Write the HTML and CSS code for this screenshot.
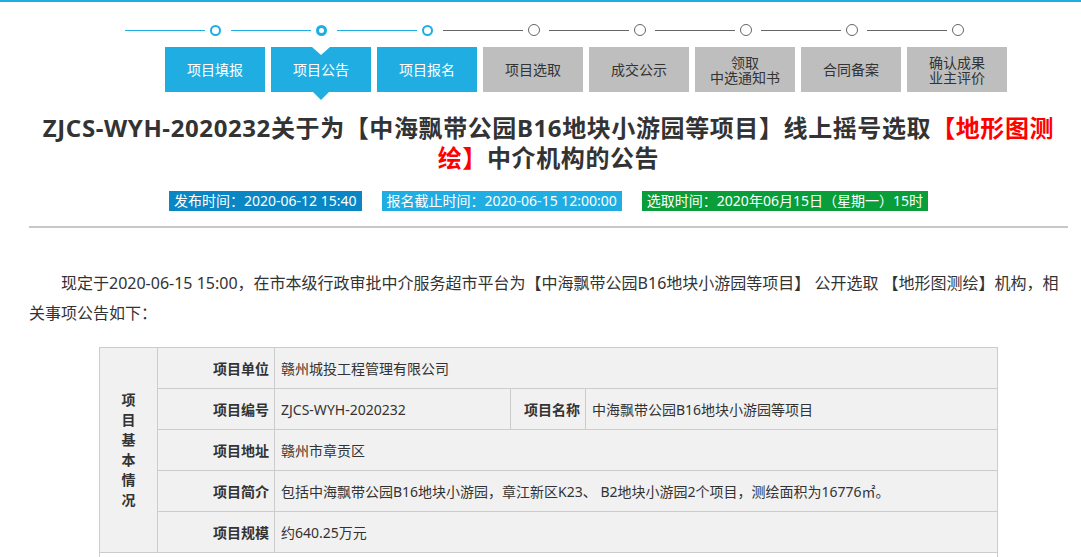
FILE: index.html
```html
<!DOCTYPE html>
<html lang="zh-CN">
<head>
<meta charset="utf-8">
<title>公告</title>
<link rel="stylesheet" href="styles.css">
</head>
<body>
<div class="topbar"></div>
<div class="steps">
  <div class="dots">
    <div class="unit done"><span class="line"></span><span class="dot"></span></div>
    <div class="unit active"><span class="line"></span><span class="dot"></span></div>
    <div class="unit done"><span class="line"></span><span class="dot"></span></div>
    <div class="unit todo"><span class="line"></span><span class="dot"></span></div>
    <div class="unit todo"><span class="line"></span><span class="dot"></span></div>
    <div class="unit todo"><span class="line"></span><span class="dot"></span></div>
    <div class="unit todo"><span class="line"></span><span class="dot"></span></div>
    <div class="unit todo"><span class="line"></span><span class="dot"></span></div>
  </div>
  <div class="btns">
    <div class="btn on">项目填报</div>
    <div class="btn on cur">项目公告</div>
    <div class="btn on">项目报名</div>
    <div class="btn">项目选取</div>
    <div class="btn">成交公示</div>
    <div class="btn two"><span>领取</span><span>中选通知书</span></div>
    <div class="btn">合同备案</div>
    <div class="btn two"><span>确认成果</span><span>业主评价</span></div>
  </div>
</div>
<div class="content">
  <h1 class="title">ZJCS-WYH-2020232关于为【中海飘带公园B16地块小游园等项目】线上摇号选取<span class="red">【地形图测<br>绘】</span>中介机构的公告</h1>
  <div class="tags">
    <span class="tag t1">发布时间：2020-06-12 15:40</span>
    <span class="tag t2">报名截止时间：2020-06-15 12:00:00</span>
    <span class="tag t3">选取时间：2020年06月15日（星期一）15时</span>
  </div>
  <div class="rule"></div>
  <p class="intro">现定于2020-06-15 15:00，在市本级行政审批中介服务超市平台为【中海飘带公园B16地块小游园等项目】 公开选取 【地形图测绘】机构，相关事项公告如下：</p>
  <table class="info">
    <colgroup>
      <col class="c1"><col class="c2"><col class="c3"><col class="c4"><col class="c5">
    </colgroup>
    <tr>
      <th rowspan="5" class="vert">项<br>目<br>基<br>本<br>情<br>况</th>
      <th class="lab">项目单位</th>
      <td colspan="3">赣州城投工程管理有限公司</td>
    </tr>
    <tr>
      <th class="lab">项目编号</th>
      <td>ZJCS-WYH-2020232</td>
      <th class="lab">项目名称</th>
      <td>中海飘带公园B16地块小游园等项目</td>
    </tr>
    <tr>
      <th class="lab">项目地址</th>
      <td colspan="3">赣州市章贡区</td>
    </tr>
    <tr>
      <th class="lab">项目简介</th>
      <td colspan="3">包括中海飘带公园B16地块小游园，章江新区K23、 B2地块小游园2个项目，测绘面积为16776㎡。</td>
    </tr>
    <tr>
      <th class="lab">项目规模</th>
      <td colspan="3">约640.25万元</td>
    </tr>
    <tr class="next">
      <td colspan="5"></td>
    </tr>
  </table>
</div>
</body>
</html>
```

FILE: styles.css
```css
* { box-sizing: border-box; }
html, body { margin: 0; padding: 0; background: #fff; }
body {
  font-family: "Noto Sans", "Noto Sans CJK SC", sans-serif;
  color: #333;
  font-size: 14px;
}
.topbar { height: 2px; background: #1fade2; }

.steps { padding-left: 125px; }
.dots { display: flex; align-items: center; margin-top: 22px; height: 12px; }
.unit { display: flex; align-items: center; width: 106px; }
.unit .line { display: block; width: 80px; height: 1px; margin-right: 5px; }
.unit .dot { display: block; width: 11px; height: 11px; border-radius: 50%; background: #fff; }
.done .line, .active .line { background: #1fade2; }
.done .dot { border: 2px solid #1fade2; }
.active .dot { border: 3px solid #1fade2; }
.todo .line { background: #666; }
.todo .dot { border: 1px solid #666; width: 12px; height: 12px; }

.btns { display: flex; gap: 6px; margin-left: 40px; margin-top: 11px; }
.btn {
  position: relative;
  width: 100px; height: 45px;
  background: #bebebe; color: #333;
  display: flex; flex-direction: column; align-items: center; justify-content: center;
  text-align: center; font-size: 14px; line-height: 16px;
}
.btn.two span { display: block; height: 15px; line-height: 15px; }
.btn.on { background: #1fade2; color: #fff; }
.btn.cur::before {
  content: ""; position: absolute; top: 0; left: 50%; margin-left: -9px;
  border-left: 9px solid transparent; border-right: 9px solid transparent;
  border-top: 8px solid #fff;
}
.btn.cur::after {
  content: ""; position: absolute; top: 45px; left: 50%; margin-left: -8px;
  border-left: 8px solid transparent; border-right: 8px solid transparent;
  border-top: 8px solid #1fade2;
}

.content { margin-left: 29px; width: 1039px; }
.title {
  margin: 21px 0 0; text-align: center;
  font-size: 24px; line-height: 30px; font-weight: bold; color: #333;
  letter-spacing: 0.6px;
}
.red { color: #f00; }
.tags { display: flex; justify-content: center; gap: 20px; margin-top: 18px; }
.tag { height: 20px; line-height: 20px; padding: 0 5px; color: #fff; font-size: 14px; }
.t1 { background: #0a86c4; }
.t2 { background: #1fade2; }
.t3 { background: #0a9e3a; }
.rule { height: 2px; background: #c8c8c8; margin-top: 15px; }
.intro {
  margin: 40px 0 0; font-size: 16px; line-height: 30px; text-indent: 2em; color: #333;
}

.info {
  margin: 19px auto 0; width: 898px; border-collapse: collapse; table-layout: fixed;
  background: #f1f1f1; font-size: 14px;
}
.c1 { width: 58px; } .c2 { width: 117px; } .c3 { width: 236px; } .c4 { width: 75px; } .c5 { width: 412px; }
.info th, .info td { border: 1px solid #ccc; height: 41px; padding: 0 6px; color: #333; }
.info th { font-weight: bold; }
.info td { text-align: left; font-weight: normal; }
.info .lab { text-align: right; padding-right: 5px; }
.info .vert { text-align: center; line-height: 20px; padding: 0; }
.info .next td { background: #fff; }
```
